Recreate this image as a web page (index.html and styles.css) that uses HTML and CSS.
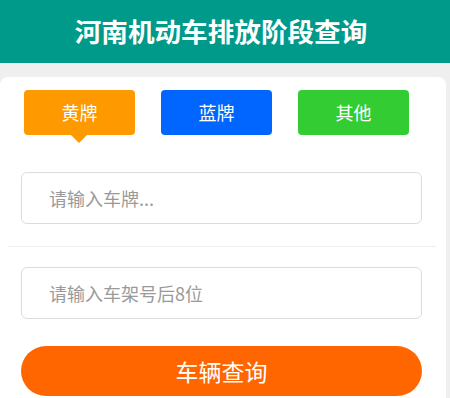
FILE: index.html
```html
<!DOCTYPE html>
<html lang="zh-CN">
<head>
<meta charset="utf-8">
<title>河南机动车排放阶段查询</title>
<link rel="stylesheet" href="styles.css">
</head>
<body>
<header class="topbar">河南机动车排放阶段查询</header>
<main class="card">
  <div class="tabs">
    <div class="tab tab-yellow active">黄牌</div>
    <div class="tab tab-blue">蓝牌</div>
    <div class="tab tab-green">其他</div>
  </div>
  <div class="field first">
    <input class="input" type="text" placeholder="请输入车牌...">
  </div>
  <div class="divider"></div>
  <div class="field">
    <input class="input" type="text" placeholder="请输入车架号后8位">
  </div>
  <div class="field">
    <button class="submit" type="button">车辆查询</button>
  </div>
</main>
</body>
</html>
```
FILE: styles.css
```css
html, body {
  margin: 0;
  padding: 0;
}
body {
  background: #efefef;
  font-family: "Noto Sans CJK SC", "Noto Sans", sans-serif;
  width: 450px;
  height: 398px;
  overflow: hidden;
}
.topbar {
  height: 63px;
  background: #009a8a;
  color: #ffffff;
  font-size: 26.6px;
  font-weight: 700;
  line-height: 62px;
  text-align: center;
  padding-right: 8px;
}
.card {
  margin: 14px 4px 0 0;
  background: #ffffff;
  border-radius: 8px 8px 0 0;
  padding-top: 13px;
  height: 308px;
}
.tabs {
  display: flex;
  gap: 26px;
  padding-left: 24px;
}
.tab {
  position: relative;
  width: 111px;
  height: 45px;
  border-radius: 4px;
  color: #ffffff;
  font-size: 18px;
  line-height: 45px;
  text-align: center;
}
.tab-yellow { background: #ff9900; }
.tab-blue { background: #0066ff; }
.tab-green { background: #33cc33; }
.tab.active::after {
  content: "";
  position: absolute;
  left: 47px;
  top: 45px;
  border-left: 8px solid transparent;
  border-right: 8px solid transparent;
  border-top: 8px solid #ff9900;
}
.field {
  padding: 0 24px 0 21px;
  margin-top: 27px;
}
.field.first {
  margin-top: 37px;
}
.input {
  display: block;
  box-sizing: border-box;
  width: 401px;
  height: 52px;
  border: 1px solid #dcdcdc;
  border-radius: 6px;
  padding: 0 0 0 27px;
  font-family: "Noto Sans CJK SC", "Noto Sans", sans-serif;
  font-size: 18px;
  color: #333;
  background: #fff;
  outline: none;
}
.input::placeholder {
  color: #9a9a9a;
}
.divider {
  height: 1px;
  background: #eeeeee;
  margin: 22px 10px 0 8px;
}
.divider + .field {
  margin-top: 20px;
}
.submit {
  display: block;
  width: 401px;
  height: 50px;
  border: none;
  border-radius: 25px;
  background: #ff6600;
  color: #ffffff;
  font-family: "Noto Sans CJK SC", "Noto Sans", sans-serif;
  font-size: 23px;
  padding: 0;
  margin-top: 1px;
}
```
